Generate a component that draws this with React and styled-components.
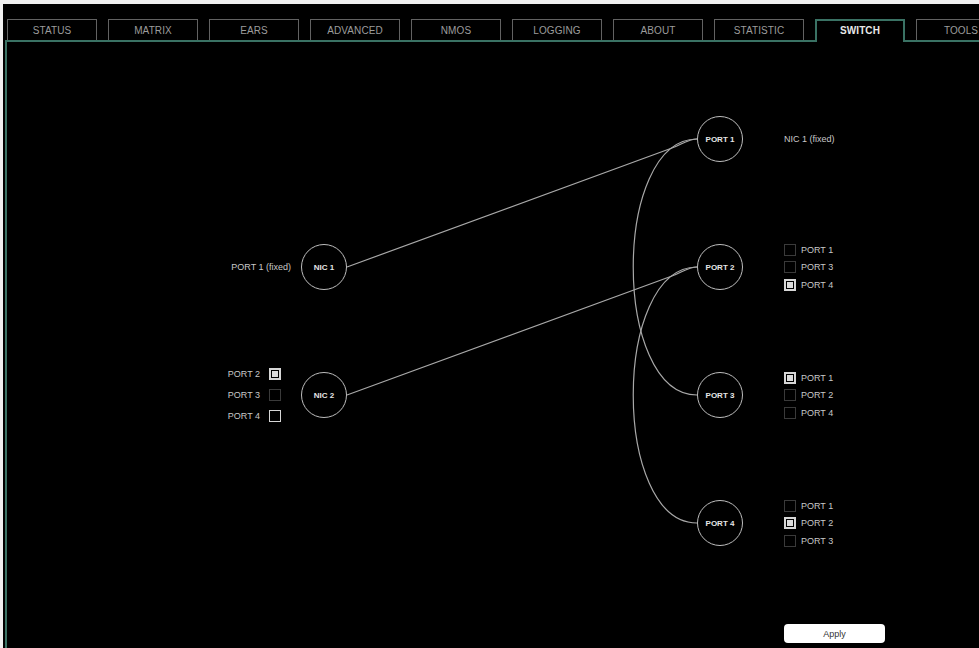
import React from "react";
import styled, { createGlobalStyle } from "styled-components";

const TEAL = "#3a7264";

const Global = createGlobalStyle`
  html, body { margin: 0; padding: 0; background: #f0f0f0; overflow: hidden; }
  body { font-family: "Liberation Sans", Arial, sans-serif; }
`;

const Screen = styled.div`
  margin: 4px 0 0 3px;
  background: #000;
  min-height: calc(100vh - 4px);
  overflow: hidden;
`;

const TabBar = styled.div`
  display: flex;
  align-items: flex-end;
  gap: 11px;
  padding: 15px 0 0 4px;
  white-space: nowrap;
`;

const Tab = styled.div`
  flex: 0 0 90px;
  box-sizing: border-box;
  height: ${(p) => (p.$active ? "23px" : "21px")};
  margin-bottom: ${(p) => (p.$active ? "-2px" : "0")};
  padding-bottom: ${(p) => (p.$active ? "2px" : "0")};
  border: ${(p) => (p.$active ? `2px solid ${TEAL}` : "1.5px solid #626262")};
  border-bottom: none;
  background: #000;
  position: relative;
  z-index: ${(p) => (p.$active ? 1 : 0)};
  display: flex;
  align-items: center;
  justify-content: center;
  font-size: 10px;
  font-weight: ${(p) => (p.$active ? 700 : 400)};
  color: ${(p) => (p.$active ? "#e8e8e8" : "#9c9c9c")};
  letter-spacing: 0.1px;
`;

const Panel = styled.div`
  margin-left: 2px;
  border-top: 2px solid ${TEAL};
  border-left: 2px solid ${TEAL};
  min-height: 620px;
`;

const Diagram = styled.div`
  position: relative;
  display: grid;
  grid-template-columns: 294px 46px 350px 46px 1fr;
  grid-template-rows: repeat(4, 128px) auto;
  padding-top: 33px;
`;

const Wires = styled.svg`
  position: absolute;
  left: 0;
  top: 0;
  width: 800px;
  height: 560px;
  pointer-events: none;
`;

const Cell = styled.div`
  grid-column: ${(p) => p.$col};
  grid-row: ${(p) => p.$row};
  display: flex;
  align-items: center;
  justify-content: ${(p) => (p.$end ? "flex-end" : "flex-start")};
  padding-right: ${(p) => p.$pr || 0}px;
  padding-left: ${(p) => p.$pl || 0}px;
  position: relative;
  z-index: 1;
`;

const Node = styled.div`
  box-sizing: border-box;
  width: 46px;
  height: 46px;
  border-radius: 50%;
  border: 1.5px solid #bdbdbd;
  display: flex;
  align-items: center;
  justify-content: center;
  font-size: 8px;
  font-weight: 700;
  color: #e6e6e6;
  white-space: nowrap;
`;

const Label = styled.span`
  font-size: 9px;
  color: #c8c8c8;
  white-space: nowrap;
`;

const OptionList = styled.div`
  display: flex;
  flex-direction: column;
  gap: ${(p) => p.$gap}px;
`;

const Option = styled.div`
  display: flex;
  align-items: center;
  gap: ${(p) => p.$gap}px;
  height: 12px;
`;

const Box = styled.span`
  box-sizing: border-box;
  width: 12px;
  height: 12px;
  flex: 0 0 12px;
  position: relative;
  border: ${(p) =>
    p.$checked ? "2px solid #d6d6d6" : p.$bright ? "1.5px solid #d6d6d6" : "1px solid #3a3a3a"};
  &::after {
    content: "";
    display: ${(p) => (p.$checked ? "block" : "none")};
    position: absolute;
    left: 1px;
    top: 1px;
    width: 6px;
    height: 6px;
    background: #dcdcdc;
  }
`;

const ApplyButton = styled.button`
  margin: 37px 0 0 41px;
  width: 101px;
  height: 19px;
  border: none;
  border-radius: 4px;
  background: #fff;
  color: #333;
  font-family: "Liberation Sans", Arial, sans-serif;
  font-size: 9px;
  padding: 0;
`;

const tabs = ["STATUS", "MATRIX", "EARS", "ADVANCED", "NMOS", "LOGGING", "ABOUT", "STATISTIC", "SWITCH", "TOOLS"];

const rightLists = [
  { row: 2, items: [["PORT 1", false], ["PORT 3", false], ["PORT 4", true]] },
  { row: 3, items: [["PORT 1", true], ["PORT 2", false], ["PORT 4", false]] },
  { row: 4, items: [["PORT 1", false], ["PORT 2", true], ["PORT 3", false]] },
];

export default function App() {
  return (
    <>
      <Global />
      <Screen>
        <TabBar>
          {tabs.map((t) => (
            <Tab key={t} $active={t === "SWITCH"}>{t}</Tab>
          ))}
        </TabBar>
        <Panel>
          <Diagram>
            <Wires viewBox="0 0 800 560" fill="none" stroke="#a8a8a8" strokeWidth="1.2">
              <path d="M340 225 L665 106 C675 102.5 681 97 690 97" />
              <path d="M340 353 L665 234 C675 230.5 681 225 690 225" />
              <path d="M690 97 C605 97 605 353 690 353" />
              <path d="M690 225 C605 225 605 481 690 481" />
            </Wires>

            <Cell $col={1} $row={2} $end $pr={10}>
              <Label>PORT 1 (fixed)</Label>
            </Cell>
            <Cell $col={1} $row={3} $end $pr={20}>
              <OptionList $gap={9}>
                <Option $gap={9}><Label>PORT 2</Label><Box $checked /></Option>
                <Option $gap={9}><Label>PORT 3</Label><Box /></Option>
                <Option $gap={9}><Label>PORT 4</Label><Box $bright /></Option>
              </OptionList>
            </Cell>

            <Cell $col={2} $row={2}><Node>NIC 1</Node></Cell>
            <Cell $col={2} $row={3}><Node>NIC 2</Node></Cell>

            {[1, 2, 3, 4].map((n) => (
              <Cell key={n} $col={4} $row={n}><Node>PORT {n}</Node></Cell>
            ))}

            <Cell $col={5} $row={1} $pl={41}>
              <Label>NIC 1 (fixed)</Label>
            </Cell>
            {rightLists.map((l) => (
              <Cell key={l.row} $col={5} $row={l.row} $pl={41}>
                <OptionList $gap={5.5}>
                  {l.items.map(([name, on]) => (
                    <Option key={name} $gap={5}><Box $checked={on} /><Label>{name}</Label></Option>
                  ))}
                </OptionList>
              </Cell>
            ))}

            <Cell $col={5} $row={5}>
              <ApplyButton>Apply</ApplyButton>
            </Cell>
          </Diagram>
        </Panel>
      </Screen>
    </>
  );
}
